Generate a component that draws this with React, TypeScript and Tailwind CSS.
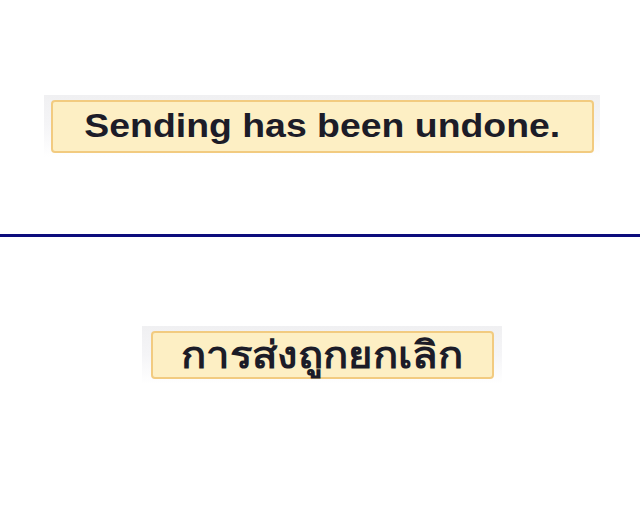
export default function App() {
  return (
    <div className="w-[640px] h-[512px] bg-white flex flex-col font-['Liberation_Sans',Arial,sans-serif]">
      <div className="h-[234px] pt-[95px] pl-[4px] flex justify-center items-start">
        <Notice
          text="Sending has been undone."
          className="w-[556px] h-[62px]"
          inner="w-[543px] h-[53px] text-[34px] pb-[3px]"
        />
      </div>
      <div className="h-[3px] bg-[#0c0c7c]" />
      <div className="flex-1 pt-[89px] pl-[4px] flex justify-center items-start">
        <Notice
          text="การส่งถูกยกเลิก"
          className="w-[360px] h-[58px]"
          inner="w-[343px] h-[48px] text-[38px]"
        />
      </div>
    </div>
  );
}

function Notice({ text, className, inner }: { text: string; className: string; inner: string }) {
  return (
    <div className={`${className} flex items-center justify-center bg-gradient-to-b from-[#f0f0f2] via-[#f5f5f7] to-white`}>
      <div
        className={`${inner} flex items-center justify-center rounded-[4px] border-2 border-[#f2cb80] bg-[#fdefc4] font-bold text-[#1c1c28] leading-none`}
      >
        <span className="inline-block scale-x-[1.1]">{text}</span>
      </div>
    </div>
  );
}
